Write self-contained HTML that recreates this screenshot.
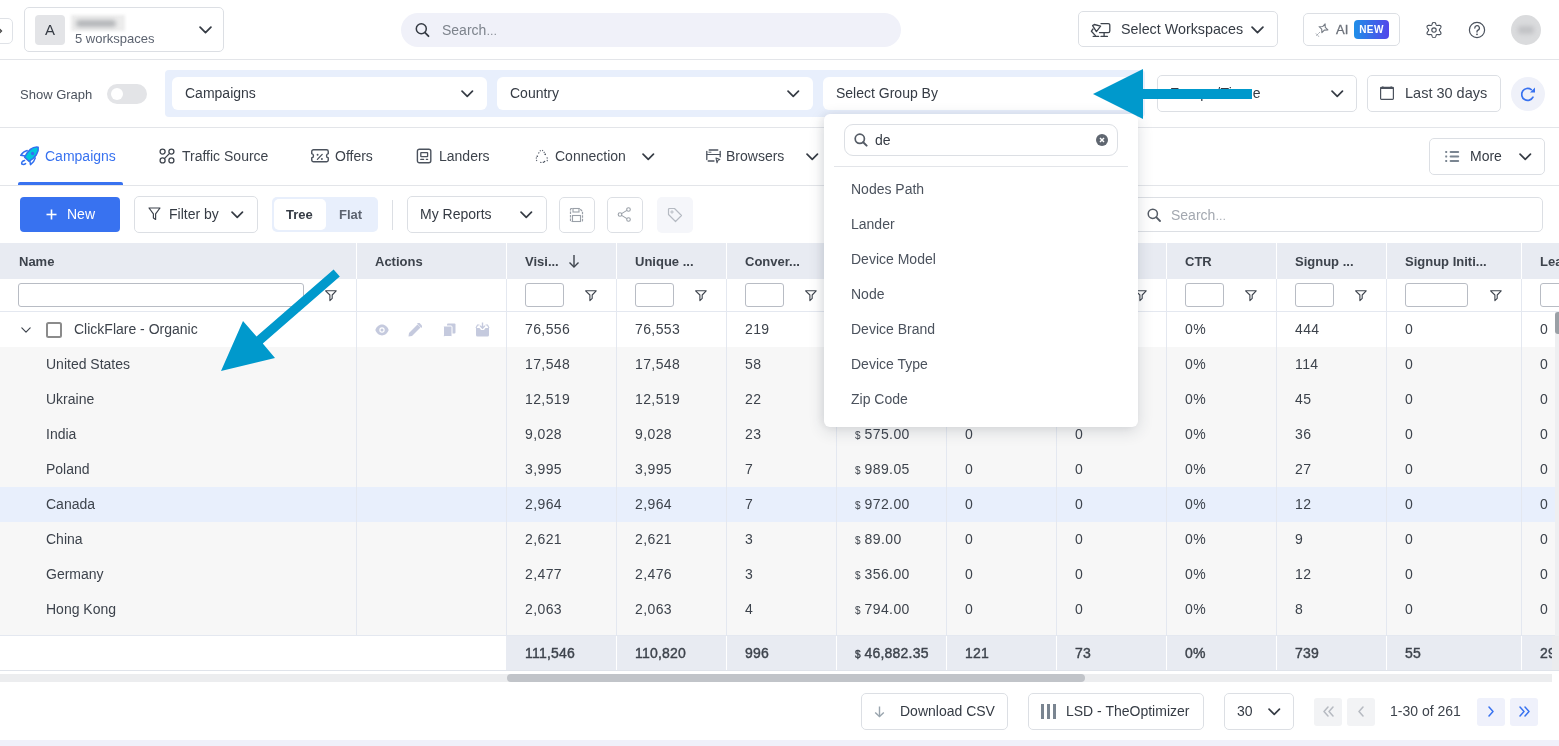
<!DOCTYPE html>
<html><head><meta charset="utf-8"><style>
html,body{margin:0;padding:0;background:#fff;width:1559px;height:746px;overflow:hidden;font-family:"Liberation Sans",sans-serif;}
body{position:relative}
#root{position:absolute;left:0;top:0;width:1559px;height:746px;will-change:transform}
</style></head><body><div id="root">
<div style="position:absolute;left:-20px;top:18px;width:33px;height:26px;border:1px solid #dfe2e7;border-radius:5px;background:#fff;box-sizing:border-box"></div><svg style="position:absolute;left:-2px;top:27px" width="5" height="8" viewBox="0 0 5 8"><polyline points="0.5,1 3.5,4 0.5,7" fill="none" stroke="#444" stroke-width="1.3"/></svg><div style="position:absolute;left:24px;top:7px;width:200px;height:45px;border:1px solid #dcdfe4;border-radius:5px;box-sizing:border-box;background:#fff"></div><div style="position:absolute;left:35px;top:15px;width:30px;height:30px;background:#e3e4e7;border-radius:4px;color:#353b44;font-size:15px;line-height:30px;text-align:center">A</div><div style="position:absolute;left:71px;top:15px;width:54px;height:16px;background:#ececec;filter:blur(1.5px)"></div><div style="position:absolute;left:76px;top:20px;width:40px;height:7px;background:#b4b6b9;border-radius:4px;filter:blur(2px)"></div><div style="position:absolute;left:75px;top:31px;white-space:nowrap;line-height:16px;font-size:13px;color:#5c6370">5 workspaces</div><svg style="position:absolute;left:199px;top:26px" width="13" height="7.8" viewBox="0 0 12 7"><polyline points="1,1 6,6 11,1" fill="none" stroke="#353b44" stroke-width="1.6" stroke-linecap="round" stroke-linejoin="round"/></svg><div style="position:absolute;left:0;top:59px;width:1559px;height:1px;background:#e3e5e9"></div><div style="position:absolute;left:401px;top:13px;width:500px;height:34px;background:#f0f1f9;border-radius:17px"></div><svg style="position:absolute;left:415px;top:22px" width="15" height="16" viewBox="0 0 15 16"><circle cx="6.3" cy="6.8" r="5" fill="none" stroke="#353b44" stroke-width="1.5"/><line x1="10" y1="10.6" x2="13.5" y2="14.2" stroke="#353b44" stroke-width="1.8" stroke-linecap="round"/></svg><div style="position:absolute;left:442px;top:22px;white-space:nowrap;line-height:16px;font-size:14px;color:#7d838c">Search<span style="font-size:11px">…</span></div><div style="position:absolute;left:1078px;top:11px;width:200px;height:36px;border:1px solid #dcdfe4;border-radius:5px;box-sizing:border-box"></div><svg style="position:absolute;left:1085px;top:15px" width="28" height="28" viewBox="0 0 28 28"><g fill="none" stroke="#3d434c" stroke-width="1.3" stroke-linecap="round" stroke-linejoin="round"><path d="M16 8.6 H23.2 a1.6 1.6 0 0 1 1.6 1.6 V16 a1.6 1.6 0 0 1 -1.6 1.6 H14.5"/><line x1="19.1" y1="17.6" x2="19.1" y2="21.4"/><line x1="16" y1="21.4" x2="22.4" y2="21.4"/><path d="M7.6 10.6 L9.3 9.5 L15.6 11.2 L11.4 16.6 Z"/><polyline points="8,14 6.4,16.2 10.4,20.6"/><line x1="8.2" y1="21.4" x2="13.6" y2="21.4"/></g></svg><div style="position:absolute;left:1121px;top:21px;white-space:nowrap;line-height:16px;font-size:14.3px;color:#353b44">Select Workspaces</div><svg style="position:absolute;left:1251px;top:26px" width="13" height="7.8" viewBox="0 0 12 7"><polyline points="1,1 6,6 11,1" fill="none" stroke="#353b44" stroke-width="1.6" stroke-linecap="round" stroke-linejoin="round"/></svg><div style="position:absolute;left:1303px;top:13px;width:97px;height:33px;border:1px solid #dcdfe4;border-radius:5px;box-sizing:border-box"></div><svg style="position:absolute;left:1314px;top:22px" width="16" height="16" viewBox="0 0 16 16"><path d="M9.5 1.6 L10.9 4.9 L14.2 6.3 L10.9 7.7 L9.5 11 L8.1 7.7 L4.8 6.3 L8.1 4.9 Z" fill="none" stroke="#777d86" stroke-width="1.1" stroke-linejoin="round" transform="rotate(20 9.5 6.3)"/><path d="M5.6 10.4 L4.6 11.4 M3.6 12.4 L2.6 13.4 M2.2 11.8 L3 12.6 M4 13.6 L4.6 14.4" stroke="#a0a5ad" stroke-width="1" stroke-linecap="round"/></svg><div style="position:absolute;left:1336px;top:22px;white-space:nowrap;line-height:16px;font-size:13px;color:#6b7079;-webkit-text-stroke:0.3px #6b7079">AI</div><div style="position:absolute;left:1354px;top:20px;width:35px;height:19px;background:linear-gradient(90deg,#1f8fe8,#5346ea);border-radius:4px;color:#fff;font-size:10px;font-weight:bold;line-height:19px;text-align:center;letter-spacing:0.4px">NEW</div><svg style="position:absolute;left:1426px;top:22px" width="16" height="16" viewBox="0 0 16 16"><path d="M8.00,0.15 L8.27,0.18 L8.54,0.28 L8.80,0.43 L9.03,0.64 L9.25,0.88 L9.45,1.17 L9.63,1.47 L9.78,1.78 L9.92,2.09 L10.04,2.39 L10.16,2.66 L10.27,2.89 L10.39,3.09 L10.52,3.25 L10.67,3.37 L10.85,3.44 L11.05,3.48 L11.28,3.48 L11.55,3.46 L11.84,3.42 L12.16,3.38 L12.49,3.35 L12.84,3.32 L13.19,3.33 L13.53,3.36 L13.86,3.42 L14.16,3.53 L14.42,3.67 L14.63,3.85 L14.80,4.08 L14.91,4.33 L14.96,4.61 L14.95,4.90 L14.89,5.21 L14.79,5.53 L14.64,5.84 L14.47,6.14 L14.28,6.43 L14.08,6.71 L13.88,6.96 L13.71,7.20 L13.56,7.42 L13.44,7.62 L13.37,7.81 L13.35,8.00 L13.37,8.19 L13.44,8.38 L13.56,8.58 L13.71,8.80 L13.88,9.04 L14.08,9.29 L14.28,9.57 L14.47,9.86 L14.64,10.16 L14.79,10.47 L14.89,10.79 L14.95,11.10 L14.96,11.39 L14.91,11.67 L14.80,11.92 L14.63,12.15 L14.42,12.33 L14.16,12.47 L13.86,12.58 L13.53,12.64 L13.19,12.67 L12.84,12.68 L12.49,12.65 L12.16,12.62 L11.84,12.58 L11.55,12.54 L11.28,12.52 L11.05,12.52 L10.85,12.56 L10.67,12.63 L10.52,12.75 L10.39,12.91 L10.27,13.11 L10.16,13.34 L10.04,13.61 L9.92,13.91 L9.78,14.22 L9.63,14.53 L9.45,14.83 L9.25,15.12 L9.03,15.36 L8.80,15.57 L8.54,15.72 L8.27,15.82 L8.00,15.85 L7.73,15.82 L7.46,15.72 L7.20,15.57 L6.97,15.36 L6.75,15.12 L6.55,14.83 L6.37,14.53 L6.22,14.22 L6.08,13.91 L5.96,13.61 L5.84,13.34 L5.73,13.11 L5.61,12.91 L5.48,12.75 L5.32,12.63 L5.15,12.56 L4.95,12.52 L4.72,12.52 L4.45,12.54 L4.16,12.58 L3.84,12.62 L3.51,12.65 L3.16,12.68 L2.81,12.67 L2.47,12.64 L2.14,12.58 L1.84,12.47 L1.58,12.33 L1.37,12.15 L1.20,11.93 L1.09,11.67 L1.04,11.39 L1.05,11.10 L1.11,10.79 L1.21,10.47 L1.36,10.16 L1.53,9.86 L1.72,9.57 L1.92,9.29 L2.12,9.04 L2.29,8.80 L2.44,8.58 L2.56,8.38 L2.63,8.19 L2.65,8.00 L2.63,7.81 L2.56,7.62 L2.44,7.42 L2.29,7.20 L2.12,6.96 L1.92,6.71 L1.72,6.43 L1.53,6.14 L1.36,5.84 L1.21,5.53 L1.11,5.21 L1.05,4.90 L1.04,4.61 L1.09,4.33 L1.20,4.07 L1.37,3.85 L1.58,3.67 L1.84,3.53 L2.14,3.42 L2.47,3.36 L2.81,3.33 L3.16,3.32 L3.51,3.35 L3.84,3.38 L4.16,3.42 L4.45,3.46 L4.72,3.48 L4.95,3.48 L5.15,3.44 L5.32,3.37 L5.48,3.25 L5.61,3.09 L5.73,2.89 L5.84,2.66 L5.96,2.39 L6.08,2.09 L6.22,1.78 L6.37,1.47 L6.55,1.17 L6.75,0.88 L6.97,0.64 L7.20,0.43 L7.46,0.28 L7.73,0.18 L8.00,0.15Z" fill="none" stroke="#4b525d" stroke-width="1.15" stroke-linejoin="round"/><circle cx="8" cy="8" r="2.2" fill="none" stroke="#4b525d" stroke-width="1.15"/></svg><svg style="position:absolute;left:1468px;top:21px" width="18" height="18" viewBox="0 0 18 18"><circle cx="9" cy="9" r="7.6" fill="none" stroke="#4b525d" stroke-width="1.2"/><path d="M6.8 7 a2.3 2.3 0 1 1 3.2 2.1 c-0.7 0.35 -1 0.8 -1 1.5 v0.5" fill="none" stroke="#4b525d" stroke-width="1.3" stroke-linecap="round"/><circle cx="9" cy="13.3" r="0.9" fill="#4b525d"/></svg><div style="position:absolute;left:1511px;top:15px;width:30px;height:30px;background:#dadbdd;border-radius:50%"></div><div style="position:absolute;left:1518px;top:26px;width:16px;height:8px;background:#c2c3c6;border-radius:3px;filter:blur(2px)"></div><div style="position:absolute;left:20px;top:87px;white-space:nowrap;line-height:16px;font-size:13px;color:#4b525d">Show Graph</div><div style="position:absolute;left:107px;top:84px;width:40px;height:20px;background:#e3e4e7;border-radius:10px"></div><div style="position:absolute;left:111px;top:88px;width:12px;height:12px;background:#fff;border-radius:50%"></div><div style="position:absolute;left:165px;top:70px;width:980px;height:47px;background:#e8effc;border-radius:4px"></div><div style="position:absolute;left:172px;top:77px;width:315px;height:33px;background:#fff;border-radius:6px"></div><div style="position:absolute;left:185px;top:85px;white-space:nowrap;line-height:16px;font-size:14px;color:#353b44">Campaigns</div><svg style="position:absolute;left:461px;top:90px" width="12.5" height="7.5" viewBox="0 0 12 7"><polyline points="1,1 6,6 11,1" fill="none" stroke="#353b44" stroke-width="1.6" stroke-linecap="round" stroke-linejoin="round"/></svg><div style="position:absolute;left:497px;top:77px;width:316px;height:33px;background:#fff;border-radius:6px"></div><div style="position:absolute;left:510px;top:85px;white-space:nowrap;line-height:16px;font-size:14px;color:#353b44">Country</div><svg style="position:absolute;left:787px;top:90px" width="12.5" height="7.5" viewBox="0 0 12 7"><polyline points="1,1 6,6 11,1" fill="none" stroke="#353b44" stroke-width="1.6" stroke-linecap="round" stroke-linejoin="round"/></svg><div style="position:absolute;left:823px;top:77px;width:315px;height:33px;background:#fff;border-radius:6px"></div><div style="position:absolute;left:836px;top:85px;white-space:nowrap;line-height:16px;font-size:14px;color:#353b44">Select Group By</div><div style="position:absolute;left:0;top:127px;width:1559px;height:1px;background:#e3e5e9"></div><div style="position:absolute;left:1157px;top:75px;width:200px;height:37px;border:1px solid #dcdfe4;border-radius:5px;box-sizing:border-box"></div><div style="position:absolute;left:1170px;top:85px;white-space:nowrap;line-height:16px;font-size:14px;color:#353b44;letter-spacing:0.2px">Europe/Tirane</div><svg style="position:absolute;left:1331px;top:90px" width="12.5" height="7.5" viewBox="0 0 12 7"><polyline points="1,1 6,6 11,1" fill="none" stroke="#353b44" stroke-width="1.6" stroke-linecap="round" stroke-linejoin="round"/></svg><div style="position:absolute;left:1367px;top:75px;width:134px;height:37px;border:1px solid #dcdfe4;border-radius:5px;box-sizing:border-box"></div><svg style="position:absolute;left:1380px;top:86px" width="14" height="14" viewBox="0 0 14 14"><rect x="0.6" y="1.4" width="12.8" height="12" rx="0.8" fill="none" stroke="#4b525d" stroke-width="1.2"/><rect x="0.6" y="1.2" width="12.8" height="1.8" fill="#4b525d"/><rect x="2.3" y="0.3" width="1.1" height="1.5" fill="#4b525d"/><rect x="10.6" y="0.3" width="1.1" height="1.5" fill="#4b525d"/></svg><div style="position:absolute;left:1405px;top:85px;white-space:nowrap;line-height:16px;font-size:14.5px;color:#3d434c">Last 30 days</div><div style="position:absolute;left:1511px;top:77px;width:34px;height:34px;background:#eff1f9;border-radius:50%"></div><svg style="position:absolute;left:1520px;top:86px" width="16" height="16" viewBox="0 0 16 16"><path d="M13 11.2 A6 6 0 1 1 11.3 3.6" fill="none" stroke="#3872f0" stroke-width="1.7" stroke-linecap="round"/><polygon points="15,1.6 15,6.6 10,6.4" fill="#3872f0"/></svg><svg style="position:absolute;left:16px;top:143px" width="24" height="24" viewBox="0 0 24 24"><g stroke="#3170f0" stroke-width="1.5" stroke-linejoin="round" stroke-linecap="round"><path d="M11.2 7.4 C8.5 8 6.2 10 4.7 12.3 L9.2 13" fill="none"/><path d="M19.3 14.9 C18.7 17.6 16.7 19.9 14.5 21.6 L13.8 17.6" fill="none"/><path d="M22.2 4.2 C23.2 9.5 19 15 12.9 18.3 L8.6 14.1 C11.8 8 16.8 3.4 22.2 4.2 Z" fill="#00c8dc"/><path d="M8.6 17.4 C6.2 17.8 5.2 19.6 5.8 21 C7 21.6 8.6 21.3 9.6 20.6" fill="none"/></g><circle cx="16.6" cy="10.5" r="1.7" fill="#3170f0"/></svg><div style="position:absolute;left:45px;top:148px;white-space:nowrap;line-height:16px;font-size:14px;color:#3872f0">Campaigns</div><div style="position:absolute;left:18px;top:182px;width:105px;height:3px;background:#3872f0;border-radius:2px 2px 0 0"></div><svg style="position:absolute;left:159px;top:148px" width="16" height="16" viewBox="0 0 16 16"><g fill="none" stroke="#3d434c" stroke-width="1.3"><circle cx="3.6" cy="3.6" r="2.5"/><circle cx="12.4" cy="3.6" r="2.5"/><circle cx="3.6" cy="12.4" r="2.5"/><circle cx="12.4" cy="12.4" r="2.5"/><line x1="10.6" y1="5.4" x2="5.4" y2="10.6"/></g></svg><div style="position:absolute;left:182px;top:148px;white-space:nowrap;line-height:16px;font-size:14px;color:#3d434c">Traffic Source</div><svg style="position:absolute;left:311px;top:149px" width="18" height="14" viewBox="0 0 18 14"><path d="M2.5 0.75 H15.5 a1.75 1.75 0 0 1 1.75 1.75 V4.6 a2.2 2.2 0 0 0 0 4.3 V11 a1.75 1.75 0 0 1 -1.75 1.75 H2.5 a1.75 1.75 0 0 1 -1.75 -1.75 V8.9 a2.2 2.2 0 0 0 0 -4.3 V2.5 a1.75 1.75 0 0 1 1.75 -1.75 Z" fill="none" stroke="#4b525d" stroke-width="1.4"/><line x1="6.4" y1="10.4" x2="11.2" y2="5.4" stroke="#4b525d" stroke-width="1.3" stroke-linecap="round"/><circle cx="6.6" cy="5.8" r="0.95" fill="#4b525d"/><circle cx="10.9" cy="10" r="0.95" fill="#4b525d"/></svg><div style="position:absolute;left:335px;top:148px;white-space:nowrap;line-height:16px;font-size:14px;color:#3d434c">Offers</div><svg style="position:absolute;left:416px;top:148px" width="16" height="16" viewBox="0 0 16 16"><rect x="1.4" y="1.2" width="13.4" height="13.6" rx="2" fill="none" stroke="#4b525d" stroke-width="1.4"/><rect x="4.8" y="4.6" width="6.8" height="4" rx="0.4" fill="none" stroke="#4b525d" stroke-width="1.3"/><line x1="4.8" y1="11.4" x2="7.6" y2="11.4" stroke="#4b525d" stroke-width="1.3" stroke-linecap="round"/><line x1="10.4" y1="11.4" x2="11.6" y2="11.4" stroke="#4b525d" stroke-width="1.3" stroke-linecap="round"/></svg><div style="position:absolute;left:439px;top:148px;white-space:nowrap;line-height:16px;font-size:14px;color:#3d434c">Landers</div><svg style="position:absolute;left:535px;top:149px" width="14" height="14" viewBox="0 0 14 14"><g fill="none" stroke="#5c6370" stroke-width="1.1" stroke-dasharray="1.3 1.2"><path d="M3.5 4.5 C4.5 2 6 0.8 7.4 1.4 C8.5 2 9.4 3.6 10.6 6"/><path d="M11.8 8.4 C13 10 12.6 12 11 12.6"/><path d="M9 13.2 C7.5 13.6 5.5 13.5 4 13.2"/><path d="M2 12 C0.8 10.5 1 8.5 2.4 7"/></g><g fill="#4b525d"><circle cx="2.3" cy="7.2" r="0.8"/><circle cx="10.2" cy="5.2" r="0.8"/><circle cx="9.5" cy="12.6" r="0.8"/></g></svg><div style="position:absolute;left:555px;top:148px;white-space:nowrap;line-height:16px;font-size:14px;color:#3d434c">Connection</div><svg style="position:absolute;left:642px;top:153px" width="12.5" height="7.5" viewBox="0 0 12 7"><polyline points="1,1 6,6 11,1" fill="none" stroke="#353b44" stroke-width="1.6" stroke-linecap="round" stroke-linejoin="round"/></svg><svg style="position:absolute;left:706px;top:149px" width="15" height="15" viewBox="0 0 15 15"><g fill="none" stroke="#4b525d" stroke-width="1.3" stroke-linecap="round"><line x1="3.2" y1="1" x2="11.8" y2="1"/><line x1="0.8" y1="2.5" x2="0.8" y2="10.6"/><line x1="14.2" y1="2.5" x2="14.2" y2="7.8"/><line x1="2.2" y1="12" x2="8" y2="12"/><line x1="1" y1="5.5" x2="14" y2="5.5" stroke-width="1.2"/><line x1="2.8" y1="3.2" x2="5" y2="3.2" stroke-width="0.9"/><path d="M10 9 L13.8 10.6 L12 11.2 L11 13.8 Z" stroke-width="1.1" stroke-linejoin="round"/></g></svg><div style="position:absolute;left:726px;top:148px;white-space:nowrap;line-height:16px;font-size:14px;color:#3d434c">Browsers</div><svg style="position:absolute;left:806px;top:153px" width="12.5" height="7.5" viewBox="0 0 12 7"><polyline points="1,1 6,6 11,1" fill="none" stroke="#353b44" stroke-width="1.6" stroke-linecap="round" stroke-linejoin="round"/></svg><div style="position:absolute;left:1429px;top:138px;width:116px;height:37px;border:1px solid #dcdfe4;border-radius:5px;box-sizing:border-box"></div><svg style="position:absolute;left:1445px;top:150px" width="15" height="13" viewBox="0 0 15 13"><g fill="#7a8591"><rect x="0.2" y="0.9" width="2" height="2" rx="0.4"/><rect x="0.2" y="5.4" width="2" height="2" rx="0.4"/><rect x="0.2" y="9.9" width="2" height="2" rx="0.4"/><rect x="4.6" y="0.9" width="9.6" height="2" rx="1"/><rect x="4.6" y="5.4" width="9.6" height="2" rx="1"/><rect x="4.6" y="9.9" width="9.6" height="2" rx="1"/></g></svg><div style="position:absolute;left:1470px;top:148px;white-space:nowrap;line-height:16px;font-size:14px;color:#353b44">More</div><svg style="position:absolute;left:1519px;top:153px" width="12.5" height="7.5" viewBox="0 0 12 7"><polyline points="1,1 6,6 11,1" fill="none" stroke="#353b44" stroke-width="1.6" stroke-linecap="round" stroke-linejoin="round"/></svg><div style="position:absolute;left:0;top:185px;width:1559px;height:1px;background:#e3e5e9"></div><div style="position:absolute;left:20px;top:197px;width:100px;height:35px;background:#3872f0;border-radius:4px"></div><svg style="position:absolute;left:46px;top:209px" width="11" height="11" viewBox="0 0 11 11"><line x1="5.5" y1="0.5" x2="5.5" y2="10.5" stroke="#fff" stroke-width="1.6"/><line x1="0.5" y1="5.5" x2="10.5" y2="5.5" stroke="#fff" stroke-width="1.6"/></svg><div style="position:absolute;left:67px;top:206px;white-space:nowrap;line-height:16px;font-size:14px;color:#fff">New</div><div style="position:absolute;left:134px;top:196px;width:124px;height:37px;border:1px solid #dcdfe4;border-radius:5px;box-sizing:border-box"></div><svg style="position:absolute;left:148px;top:207px" width="13" height="14" viewBox="0 0 13 14"><path d="M1 1 H12 L7.6 6.8 V12.5 L5.4 11 V6.8 Z" fill="none" stroke="#3d434c" stroke-width="1.2" stroke-linejoin="round"/></svg><div style="position:absolute;left:169px;top:206px;white-space:nowrap;line-height:16px;font-size:14px;color:#353b44">Filter by</div><svg style="position:absolute;left:231px;top:211px" width="12.5" height="7.5" viewBox="0 0 12 7"><polyline points="1,1 6,6 11,1" fill="none" stroke="#353b44" stroke-width="1.6" stroke-linecap="round" stroke-linejoin="round"/></svg><div style="position:absolute;left:272px;top:197px;width:106px;height:35px;background:#e8effc;border-radius:5px"></div><div style="position:absolute;left:274px;top:199px;width:52px;height:31px;background:#fff;border-radius:5px"></div><div style="position:absolute;left:286px;top:207px;white-space:nowrap;line-height:16px;font-size:13px;color:#353b44;font-weight:bold">Tree</div><div style="position:absolute;left:339px;top:207px;white-space:nowrap;line-height:16px;font-size:13px;color:#5c6370;font-weight:bold">Flat</div><div style="position:absolute;left:392px;top:200px;width:1px;height:30px;background:#dcdfe4"></div><div style="position:absolute;left:407px;top:196px;width:140px;height:37px;border:1px solid #dcdfe4;border-radius:5px;box-sizing:border-box"></div><div style="position:absolute;left:420px;top:206px;white-space:nowrap;line-height:16px;font-size:14px;color:#353b44">My Reports</div><svg style="position:absolute;left:520px;top:211px" width="12.5" height="7.5" viewBox="0 0 12 7"><polyline points="1,1 6,6 11,1" fill="none" stroke="#353b44" stroke-width="1.6" stroke-linecap="round" stroke-linejoin="round"/></svg><div style="position:absolute;left:559px;top:197px;width:36px;height:36px;border:1px solid #dcdfe4;border-radius:5px;box-sizing:border-box"></div><svg style="position:absolute;left:569px;top:207px" width="15" height="16" viewBox="0 0 15 16"><path d="M1.5 2.5 a1 1 0 0 1 1 -1 H10.5 L13.5 4.5 V13.5 a1 1 0 0 1 -1 1 H2.5 a1 1 0 0 1 -1 -1 Z" fill="none" stroke="#9aa0a8" stroke-width="1.2" stroke-dasharray="2.5 1"/><rect x="4" y="1.5" width="6" height="3.5" fill="none" stroke="#9aa0a8" stroke-width="1.1"/><rect x="3.5" y="8.5" width="8" height="6" fill="none" stroke="#9aa0a8" stroke-width="1.1"/></svg><div style="position:absolute;left:607px;top:197px;width:36px;height:36px;border:1px solid #dcdfe4;border-radius:5px;box-sizing:border-box"></div><svg style="position:absolute;left:617px;top:207px" width="15" height="15" viewBox="0 0 15 15"><circle cx="11.5" cy="2.5" r="1.8" fill="none" stroke="#9aa0a8" stroke-width="1.1"/><circle cx="3" cy="7.5" r="1.8" fill="none" stroke="#9aa0a8" stroke-width="1.1"/><circle cx="11.5" cy="12.5" r="1.8" fill="none" stroke="#9aa0a8" stroke-width="1.1"/><line x1="4.6" y1="6.6" x2="9.9" y2="3.4" stroke="#9aa0a8" stroke-width="1.1"/><line x1="4.6" y1="8.4" x2="9.9" y2="11.6" stroke="#9aa0a8" stroke-width="1.1"/></svg><div style="position:absolute;left:657px;top:197px;width:36px;height:36px;background:#f5f6fa;border-radius:5px"></div><svg style="position:absolute;left:667px;top:207px" width="16" height="16" viewBox="0 0 16 16"><path d="M1.5 2.5 a1 1 0 0 1 1 -1 H7.5 L14.5 8.5 L8.5 14.5 L1.5 7.5 Z" fill="none" stroke="#b5bac2" stroke-width="1.2" stroke-linejoin="round"/><circle cx="5" cy="5" r="1.1" fill="none" stroke="#b5bac2" stroke-width="1"/></svg><div style="position:absolute;left:1100px;top:197px;width:443px;height:35px;border:1px solid #dcdfe4;border-radius:5px;box-sizing:border-box"></div><svg style="position:absolute;left:1147px;top:208px" width="14" height="14" viewBox="0 0 14 14"><circle cx="5.8" cy="5.8" r="4.6" fill="none" stroke="#555c66" stroke-width="1.5"/><line x1="9.2" y1="9.2" x2="13" y2="13" stroke="#555c66" stroke-width="1.8" stroke-linecap="round"/></svg><div style="position:absolute;left:1171px;top:207px;white-space:nowrap;line-height:16px;font-size:14px;color:#a3a8b0">Search<span style="font-size:11px">…</span></div><div style="position:absolute;left:0px;top:243px;width:1559px;height:36px;background:#e8ebf2"></div><div style="position:absolute;left:356px;top:243px;width:1px;height:36px;background:#fff"></div><div style="position:absolute;left:506px;top:243px;width:1px;height:36px;background:#fff"></div><div style="position:absolute;left:616px;top:243px;width:1px;height:36px;background:#fff"></div><div style="position:absolute;left:726px;top:243px;width:1px;height:36px;background:#fff"></div><div style="position:absolute;left:836px;top:243px;width:1px;height:36px;background:#fff"></div><div style="position:absolute;left:946px;top:243px;width:1px;height:36px;background:#fff"></div><div style="position:absolute;left:1056px;top:243px;width:1px;height:36px;background:#fff"></div><div style="position:absolute;left:1166px;top:243px;width:1px;height:36px;background:#fff"></div><div style="position:absolute;left:1276px;top:243px;width:1px;height:36px;background:#fff"></div><div style="position:absolute;left:1386px;top:243px;width:1px;height:36px;background:#fff"></div><div style="position:absolute;left:1521px;top:243px;width:1px;height:36px;background:#fff"></div><div style="position:absolute;left:19px;top:254px;white-space:nowrap;line-height:16px;font-size:13px;color:#3d434c;font-weight:bold">Name</div><div style="position:absolute;left:375px;top:254px;white-space:nowrap;line-height:16px;font-size:13px;color:#3d434c;font-weight:bold">Actions</div><div style="position:absolute;left:525px;top:254px;white-space:nowrap;line-height:16px;font-size:13px;color:#3d434c;font-weight:bold">Visi...</div><div style="position:absolute;left:635px;top:254px;white-space:nowrap;line-height:16px;font-size:13px;color:#3d434c;font-weight:bold">Unique ...</div><div style="position:absolute;left:745px;top:254px;white-space:nowrap;line-height:16px;font-size:13px;color:#3d434c;font-weight:bold">Conver...</div><div style="position:absolute;left:855px;top:254px;white-space:nowrap;line-height:16px;font-size:13px;color:#3d434c;font-weight:bold">Revenue</div><div style="position:absolute;left:965px;top:254px;white-space:nowrap;line-height:16px;font-size:13px;color:#3d434c;font-weight:bold">EPC</div><div style="position:absolute;left:1075px;top:254px;white-space:nowrap;line-height:16px;font-size:13px;color:#3d434c;font-weight:bold">CPV</div><div style="position:absolute;left:1185px;top:254px;white-space:nowrap;line-height:16px;font-size:13px;color:#3d434c;font-weight:bold">CTR</div><div style="position:absolute;left:1295px;top:254px;white-space:nowrap;line-height:16px;font-size:13px;color:#3d434c;font-weight:bold">Signup ...</div><div style="position:absolute;left:1405px;top:254px;white-space:nowrap;line-height:16px;font-size:13px;color:#3d434c;font-weight:bold">Signup Initi...</div><div style="position:absolute;left:1540px;top:254px;white-space:nowrap;line-height:16px;font-size:13px;color:#3d434c;font-weight:bold">Lea</div><svg style="position:absolute;left:568px;top:254px" width="12" height="14" viewBox="0 0 12 14"><line x1="6" y1="1" x2="6" y2="13" stroke="#3d434c" stroke-width="1.4"/><polyline points="1.5,8.5 6,13 10.5,8.5" fill="none" stroke="#3d434c" stroke-width="1.4"/></svg><div style="position:absolute;left:0px;top:279px;width:1559px;height:32px;background:#fff"></div><div style="position:absolute;left:18px;top:283px;width:286px;height:24px;border:1px solid #b8bcc4;border-radius:3px;box-sizing:border-box"></div><svg style="position:absolute;left:325px;top:290px" width="12" height="12" viewBox="0 0 12 12"><path d="M0.6 0.8 H11.2 L7.2 5 V8.4 L4.9 10.6 V5 Z" fill="none" stroke="#3d434c" stroke-width="1.1" stroke-linejoin="round"/></svg><div style="position:absolute;left:525px;top:283px;width:39px;height:24px;border:1px solid #b8bcc4;border-radius:3px;box-sizing:border-box"></div><svg style="position:absolute;left:585px;top:290px" width="12" height="12" viewBox="0 0 12 12"><path d="M0.6 0.8 H11.2 L7.2 5 V8.4 L4.9 10.6 V5 Z" fill="none" stroke="#3d434c" stroke-width="1.1" stroke-linejoin="round"/></svg><div style="position:absolute;left:635px;top:283px;width:39px;height:24px;border:1px solid #b8bcc4;border-radius:3px;box-sizing:border-box"></div><svg style="position:absolute;left:695px;top:290px" width="12" height="12" viewBox="0 0 12 12"><path d="M0.6 0.8 H11.2 L7.2 5 V8.4 L4.9 10.6 V5 Z" fill="none" stroke="#3d434c" stroke-width="1.1" stroke-linejoin="round"/></svg><div style="position:absolute;left:745px;top:283px;width:39px;height:24px;border:1px solid #b8bcc4;border-radius:3px;box-sizing:border-box"></div><svg style="position:absolute;left:805px;top:290px" width="12" height="12" viewBox="0 0 12 12"><path d="M0.6 0.8 H11.2 L7.2 5 V8.4 L4.9 10.6 V5 Z" fill="none" stroke="#3d434c" stroke-width="1.1" stroke-linejoin="round"/></svg><div style="position:absolute;left:855px;top:283px;width:39px;height:24px;border:1px solid #b8bcc4;border-radius:3px;box-sizing:border-box"></div><svg style="position:absolute;left:915px;top:290px" width="12" height="12" viewBox="0 0 12 12"><path d="M0.6 0.8 H11.2 L7.2 5 V8.4 L4.9 10.6 V5 Z" fill="none" stroke="#3d434c" stroke-width="1.1" stroke-linejoin="round"/></svg><div style="position:absolute;left:965px;top:283px;width:39px;height:24px;border:1px solid #b8bcc4;border-radius:3px;box-sizing:border-box"></div><svg style="position:absolute;left:1025px;top:290px" width="12" height="12" viewBox="0 0 12 12"><path d="M0.6 0.8 H11.2 L7.2 5 V8.4 L4.9 10.6 V5 Z" fill="none" stroke="#3d434c" stroke-width="1.1" stroke-linejoin="round"/></svg><div style="position:absolute;left:1075px;top:283px;width:39px;height:24px;border:1px solid #b8bcc4;border-radius:3px;box-sizing:border-box"></div><svg style="position:absolute;left:1135px;top:290px" width="12" height="12" viewBox="0 0 12 12"><path d="M0.6 0.8 H11.2 L7.2 5 V8.4 L4.9 10.6 V5 Z" fill="none" stroke="#3d434c" stroke-width="1.1" stroke-linejoin="round"/></svg><div style="position:absolute;left:1185px;top:283px;width:39px;height:24px;border:1px solid #b8bcc4;border-radius:3px;box-sizing:border-box"></div><svg style="position:absolute;left:1245px;top:290px" width="12" height="12" viewBox="0 0 12 12"><path d="M0.6 0.8 H11.2 L7.2 5 V8.4 L4.9 10.6 V5 Z" fill="none" stroke="#3d434c" stroke-width="1.1" stroke-linejoin="round"/></svg><div style="position:absolute;left:1295px;top:283px;width:39px;height:24px;border:1px solid #b8bcc4;border-radius:3px;box-sizing:border-box"></div><svg style="position:absolute;left:1355px;top:290px" width="12" height="12" viewBox="0 0 12 12"><path d="M0.6 0.8 H11.2 L7.2 5 V8.4 L4.9 10.6 V5 Z" fill="none" stroke="#3d434c" stroke-width="1.1" stroke-linejoin="round"/></svg><div style="position:absolute;left:1405px;top:283px;width:63px;height:24px;border:1px solid #b8bcc4;border-radius:3px;box-sizing:border-box"></div><svg style="position:absolute;left:1490px;top:290px" width="12" height="12" viewBox="0 0 12 12"><path d="M0.6 0.8 H11.2 L7.2 5 V8.4 L4.9 10.6 V5 Z" fill="none" stroke="#3d434c" stroke-width="1.1" stroke-linejoin="round"/></svg><div style="position:absolute;left:1540px;top:283px;width:39px;height:24px;border:1px solid #b8bcc4;border-radius:3px;box-sizing:border-box"></div><svg style="position:absolute;left:1600px;top:290px" width="12" height="12" viewBox="0 0 12 12"><path d="M0.6 0.8 H11.2 L7.2 5 V8.4 L4.9 10.6 V5 Z" fill="none" stroke="#3d434c" stroke-width="1.1" stroke-linejoin="round"/></svg><div style="position:absolute;left:356px;top:279px;width:1px;height:32px;background:#e4e8f0"></div><div style="position:absolute;left:506px;top:279px;width:1px;height:32px;background:#e4e8f0"></div><div style="position:absolute;left:616px;top:279px;width:1px;height:32px;background:#e4e8f0"></div><div style="position:absolute;left:726px;top:279px;width:1px;height:32px;background:#e4e8f0"></div><div style="position:absolute;left:836px;top:279px;width:1px;height:32px;background:#e4e8f0"></div><div style="position:absolute;left:946px;top:279px;width:1px;height:32px;background:#e4e8f0"></div><div style="position:absolute;left:1056px;top:279px;width:1px;height:32px;background:#e4e8f0"></div><div style="position:absolute;left:1166px;top:279px;width:1px;height:32px;background:#e4e8f0"></div><div style="position:absolute;left:1276px;top:279px;width:1px;height:32px;background:#e4e8f0"></div><div style="position:absolute;left:1386px;top:279px;width:1px;height:32px;background:#e4e8f0"></div><div style="position:absolute;left:1521px;top:279px;width:1px;height:32px;background:#e4e8f0"></div><div style="position:absolute;left:0px;top:311px;width:1559px;height:1px;background:#e4e8f0"></div><div style="position:absolute;left:0px;top:347px;width:1559px;height:288px;background:#f7f7f7"></div><div style="position:absolute;left:0px;top:312px;width:1559px;height:35px;background:#fff"></div><svg style="position:absolute;left:21px;top:327px" width="10" height="6.0" viewBox="0 0 12 7"><polyline points="1,1 6,6 11,1" fill="none" stroke="#3d434c" stroke-width="1.4" stroke-linecap="round" stroke-linejoin="round"/></svg><div style="position:absolute;left:46px;top:322px;width:16px;height:16px;border:2px solid #8b8b8b;border-radius:2.5px;box-sizing:border-box;background:#fff"></div><div style="position:absolute;left:74px;top:321px;white-space:nowrap;line-height:16px;font-size:14px;color:#3d434c">ClickFlare - Organic</div><svg style="position:absolute;left:375px;top:324px" width="14" height="12" viewBox="0 0 14 12"><path d="M0.3 6 C2 2 4.5 0.6 7 0.6 C9.5 0.6 12 2 13.7 6 C12 10 9.5 11.4 7 11.4 C4.5 11.4 2 10 0.3 6 Z" fill="#c5cade"/><circle cx="7" cy="6" r="2.7" fill="#fff"/><circle cx="7" cy="6" r="1.5" fill="#c5cade"/></svg><svg style="position:absolute;left:408px;top:323px" width="14" height="14" viewBox="0 0 14 14"><path d="M0.5 13.5 L1 10 L9.5 1.5 L12.5 4.5 L4 13 Z" fill="#c5cade"/><path d="M10.5 0.5 L13.5 3.5" stroke="#c5cade" stroke-width="2.2" stroke-linecap="round"/></svg><svg style="position:absolute;left:443px;top:323px" width="13" height="14" viewBox="0 0 13 14"><rect x="4" y="0.5" width="8.5" height="10" rx="1" fill="#c5cade"/><rect x="0.5" y="3" width="8.5" height="10.5" rx="1" fill="#c5cade" stroke="#fff" stroke-width="1"/></svg><svg style="position:absolute;left:475px;top:322px" width="15" height="15" viewBox="0 0 15 15"><path d="M1 6 H4.5 L6 8 H9 L10.5 6 H14 V13 a1.5 1.5 0 0 1 -1.5 1.5 H2.5 A1.5 1.5 0 0 1 1 13 Z" fill="#c5cade"/><path d="M1 6 L2.5 3 H4.5 M14 6 L12.5 3 H10.5" fill="none" stroke="#c5cade" stroke-width="1.2"/><line x1="7.5" y1="0.5" x2="7.5" y2="6" stroke="#c5cade" stroke-width="1.4"/><polyline points="5.2,3.8 7.5,6.2 9.8,3.8" fill="none" stroke="#c5cade" stroke-width="1.4"/></svg><div style="position:absolute;left:525px;top:321px;white-space:nowrap;line-height:16px;font-size:14px;color:#3d434c;letter-spacing:0.4px">76,556</div><div style="position:absolute;left:635px;top:321px;white-space:nowrap;line-height:16px;font-size:14px;color:#3d434c;letter-spacing:0.4px">76,553</div><div style="position:absolute;left:745px;top:321px;white-space:nowrap;line-height:16px;font-size:14px;color:#3d434c;letter-spacing:0.4px">219</div><div style="position:absolute;left:1185px;top:321px;white-space:nowrap;line-height:16px;font-size:14px;color:#3d434c;letter-spacing:0.4px">0%</div><div style="position:absolute;left:1295px;top:321px;white-space:nowrap;line-height:16px;font-size:14px;color:#3d434c;letter-spacing:0.4px">444</div><div style="position:absolute;left:1405px;top:321px;white-space:nowrap;line-height:16px;font-size:14px;color:#3d434c;letter-spacing:0.4px">0</div><div style="position:absolute;left:1540px;top:321px;white-space:nowrap;line-height:16px;font-size:14px;color:#3d434c;letter-spacing:0.4px">0</div><div style="position:absolute;left:356px;top:312px;width:1px;height:35px;background:#e4e8f0"></div><div style="position:absolute;left:506px;top:312px;width:1px;height:35px;background:#e4e8f0"></div><div style="position:absolute;left:616px;top:312px;width:1px;height:35px;background:#e4e8f0"></div><div style="position:absolute;left:726px;top:312px;width:1px;height:35px;background:#e4e8f0"></div><div style="position:absolute;left:836px;top:312px;width:1px;height:35px;background:#e4e8f0"></div><div style="position:absolute;left:946px;top:312px;width:1px;height:35px;background:#e4e8f0"></div><div style="position:absolute;left:1056px;top:312px;width:1px;height:35px;background:#e4e8f0"></div><div style="position:absolute;left:1166px;top:312px;width:1px;height:35px;background:#e4e8f0"></div><div style="position:absolute;left:1276px;top:312px;width:1px;height:35px;background:#e4e8f0"></div><div style="position:absolute;left:1386px;top:312px;width:1px;height:35px;background:#e4e8f0"></div><div style="position:absolute;left:1521px;top:312px;width:1px;height:35px;background:#e4e8f0"></div><div style="position:absolute;left:46px;top:356px;white-space:nowrap;line-height:16px;font-size:14px;color:#3d434c">United States</div><div style="position:absolute;left:525px;top:356px;white-space:nowrap;line-height:16px;font-size:14px;color:#3d434c;letter-spacing:0.4px">17,548</div><div style="position:absolute;left:635px;top:356px;white-space:nowrap;line-height:16px;font-size:14px;color:#3d434c;letter-spacing:0.4px">17,548</div><div style="position:absolute;left:745px;top:356px;white-space:nowrap;line-height:16px;font-size:14px;color:#3d434c;letter-spacing:0.4px">58</div><div style="position:absolute;left:1185px;top:356px;white-space:nowrap;line-height:16px;font-size:14px;color:#3d434c;letter-spacing:0.4px">0%</div><div style="position:absolute;left:1295px;top:356px;white-space:nowrap;line-height:16px;font-size:14px;color:#3d434c;letter-spacing:0.4px">114</div><div style="position:absolute;left:1405px;top:356px;white-space:nowrap;line-height:16px;font-size:14px;color:#3d434c;letter-spacing:0.4px">0</div><div style="position:absolute;left:1540px;top:356px;white-space:nowrap;line-height:16px;font-size:14px;color:#3d434c;letter-spacing:0.4px">0</div><div style="position:absolute;left:356px;top:347px;width:1px;height:35px;background:#e4e8f0"></div><div style="position:absolute;left:506px;top:347px;width:1px;height:35px;background:#e4e8f0"></div><div style="position:absolute;left:616px;top:347px;width:1px;height:35px;background:#e4e8f0"></div><div style="position:absolute;left:726px;top:347px;width:1px;height:35px;background:#e4e8f0"></div><div style="position:absolute;left:836px;top:347px;width:1px;height:35px;background:#e4e8f0"></div><div style="position:absolute;left:946px;top:347px;width:1px;height:35px;background:#e4e8f0"></div><div style="position:absolute;left:1056px;top:347px;width:1px;height:35px;background:#e4e8f0"></div><div style="position:absolute;left:1166px;top:347px;width:1px;height:35px;background:#e4e8f0"></div><div style="position:absolute;left:1276px;top:347px;width:1px;height:35px;background:#e4e8f0"></div><div style="position:absolute;left:1386px;top:347px;width:1px;height:35px;background:#e4e8f0"></div><div style="position:absolute;left:1521px;top:347px;width:1px;height:35px;background:#e4e8f0"></div><div style="position:absolute;left:46px;top:391px;white-space:nowrap;line-height:16px;font-size:14px;color:#3d434c">Ukraine</div><div style="position:absolute;left:525px;top:391px;white-space:nowrap;line-height:16px;font-size:14px;color:#3d434c;letter-spacing:0.4px">12,519</div><div style="position:absolute;left:635px;top:391px;white-space:nowrap;line-height:16px;font-size:14px;color:#3d434c;letter-spacing:0.4px">12,519</div><div style="position:absolute;left:745px;top:391px;white-space:nowrap;line-height:16px;font-size:14px;color:#3d434c;letter-spacing:0.4px">22</div><div style="position:absolute;left:1185px;top:391px;white-space:nowrap;line-height:16px;font-size:14px;color:#3d434c;letter-spacing:0.4px">0%</div><div style="position:absolute;left:1295px;top:391px;white-space:nowrap;line-height:16px;font-size:14px;color:#3d434c;letter-spacing:0.4px">45</div><div style="position:absolute;left:1405px;top:391px;white-space:nowrap;line-height:16px;font-size:14px;color:#3d434c;letter-spacing:0.4px">0</div><div style="position:absolute;left:1540px;top:391px;white-space:nowrap;line-height:16px;font-size:14px;color:#3d434c;letter-spacing:0.4px">0</div><div style="position:absolute;left:356px;top:382px;width:1px;height:35px;background:#e4e8f0"></div><div style="position:absolute;left:506px;top:382px;width:1px;height:35px;background:#e4e8f0"></div><div style="position:absolute;left:616px;top:382px;width:1px;height:35px;background:#e4e8f0"></div><div style="position:absolute;left:726px;top:382px;width:1px;height:35px;background:#e4e8f0"></div><div style="position:absolute;left:836px;top:382px;width:1px;height:35px;background:#e4e8f0"></div><div style="position:absolute;left:946px;top:382px;width:1px;height:35px;background:#e4e8f0"></div><div style="position:absolute;left:1056px;top:382px;width:1px;height:35px;background:#e4e8f0"></div><div style="position:absolute;left:1166px;top:382px;width:1px;height:35px;background:#e4e8f0"></div><div style="position:absolute;left:1276px;top:382px;width:1px;height:35px;background:#e4e8f0"></div><div style="position:absolute;left:1386px;top:382px;width:1px;height:35px;background:#e4e8f0"></div><div style="position:absolute;left:1521px;top:382px;width:1px;height:35px;background:#e4e8f0"></div><div style="position:absolute;left:46px;top:426px;white-space:nowrap;line-height:16px;font-size:14px;color:#3d434c">India</div><div style="position:absolute;left:525px;top:426px;white-space:nowrap;line-height:16px;font-size:14px;color:#3d434c;letter-spacing:0.4px">9,028</div><div style="position:absolute;left:635px;top:426px;white-space:nowrap;line-height:16px;font-size:14px;color:#3d434c;letter-spacing:0.4px">9,028</div><div style="position:absolute;left:745px;top:426px;white-space:nowrap;line-height:16px;font-size:14px;color:#3d434c;letter-spacing:0.4px">23</div><div style="position:absolute;left:855px;top:426px;white-space:nowrap;line-height:16px;font-size:14px;color:#3d434c;letter-spacing:0.4px"><span style="font-size:10px;margin-right:4px;letter-spacing:0">$</span>575.00</div><div style="position:absolute;left:965px;top:426px;white-space:nowrap;line-height:16px;font-size:14px;color:#3d434c;letter-spacing:0.4px">0</div><div style="position:absolute;left:1075px;top:426px;white-space:nowrap;line-height:16px;font-size:14px;color:#3d434c;letter-spacing:0.4px">0</div><div style="position:absolute;left:1185px;top:426px;white-space:nowrap;line-height:16px;font-size:14px;color:#3d434c;letter-spacing:0.4px">0%</div><div style="position:absolute;left:1295px;top:426px;white-space:nowrap;line-height:16px;font-size:14px;color:#3d434c;letter-spacing:0.4px">36</div><div style="position:absolute;left:1405px;top:426px;white-space:nowrap;line-height:16px;font-size:14px;color:#3d434c;letter-spacing:0.4px">0</div><div style="position:absolute;left:1540px;top:426px;white-space:nowrap;line-height:16px;font-size:14px;color:#3d434c;letter-spacing:0.4px">0</div><div style="position:absolute;left:356px;top:417px;width:1px;height:35px;background:#e4e8f0"></div><div style="position:absolute;left:506px;top:417px;width:1px;height:35px;background:#e4e8f0"></div><div style="position:absolute;left:616px;top:417px;width:1px;height:35px;background:#e4e8f0"></div><div style="position:absolute;left:726px;top:417px;width:1px;height:35px;background:#e4e8f0"></div><div style="position:absolute;left:836px;top:417px;width:1px;height:35px;background:#e4e8f0"></div><div style="position:absolute;left:946px;top:417px;width:1px;height:35px;background:#e4e8f0"></div><div style="position:absolute;left:1056px;top:417px;width:1px;height:35px;background:#e4e8f0"></div><div style="position:absolute;left:1166px;top:417px;width:1px;height:35px;background:#e4e8f0"></div><div style="position:absolute;left:1276px;top:417px;width:1px;height:35px;background:#e4e8f0"></div><div style="position:absolute;left:1386px;top:417px;width:1px;height:35px;background:#e4e8f0"></div><div style="position:absolute;left:1521px;top:417px;width:1px;height:35px;background:#e4e8f0"></div><div style="position:absolute;left:46px;top:461px;white-space:nowrap;line-height:16px;font-size:14px;color:#3d434c">Poland</div><div style="position:absolute;left:525px;top:461px;white-space:nowrap;line-height:16px;font-size:14px;color:#3d434c;letter-spacing:0.4px">3,995</div><div style="position:absolute;left:635px;top:461px;white-space:nowrap;line-height:16px;font-size:14px;color:#3d434c;letter-spacing:0.4px">3,995</div><div style="position:absolute;left:745px;top:461px;white-space:nowrap;line-height:16px;font-size:14px;color:#3d434c;letter-spacing:0.4px">7</div><div style="position:absolute;left:855px;top:461px;white-space:nowrap;line-height:16px;font-size:14px;color:#3d434c;letter-spacing:0.4px"><span style="font-size:10px;margin-right:4px;letter-spacing:0">$</span>989.05</div><div style="position:absolute;left:965px;top:461px;white-space:nowrap;line-height:16px;font-size:14px;color:#3d434c;letter-spacing:0.4px">0</div><div style="position:absolute;left:1075px;top:461px;white-space:nowrap;line-height:16px;font-size:14px;color:#3d434c;letter-spacing:0.4px">0</div><div style="position:absolute;left:1185px;top:461px;white-space:nowrap;line-height:16px;font-size:14px;color:#3d434c;letter-spacing:0.4px">0%</div><div style="position:absolute;left:1295px;top:461px;white-space:nowrap;line-height:16px;font-size:14px;color:#3d434c;letter-spacing:0.4px">27</div><div style="position:absolute;left:1405px;top:461px;white-space:nowrap;line-height:16px;font-size:14px;color:#3d434c;letter-spacing:0.4px">0</div><div style="position:absolute;left:1540px;top:461px;white-space:nowrap;line-height:16px;font-size:14px;color:#3d434c;letter-spacing:0.4px">0</div><div style="position:absolute;left:356px;top:452px;width:1px;height:35px;background:#e4e8f0"></div><div style="position:absolute;left:506px;top:452px;width:1px;height:35px;background:#e4e8f0"></div><div style="position:absolute;left:616px;top:452px;width:1px;height:35px;background:#e4e8f0"></div><div style="position:absolute;left:726px;top:452px;width:1px;height:35px;background:#e4e8f0"></div><div style="position:absolute;left:836px;top:452px;width:1px;height:35px;background:#e4e8f0"></div><div style="position:absolute;left:946px;top:452px;width:1px;height:35px;background:#e4e8f0"></div><div style="position:absolute;left:1056px;top:452px;width:1px;height:35px;background:#e4e8f0"></div><div style="position:absolute;left:1166px;top:452px;width:1px;height:35px;background:#e4e8f0"></div><div style="position:absolute;left:1276px;top:452px;width:1px;height:35px;background:#e4e8f0"></div><div style="position:absolute;left:1386px;top:452px;width:1px;height:35px;background:#e4e8f0"></div><div style="position:absolute;left:1521px;top:452px;width:1px;height:35px;background:#e4e8f0"></div><div style="position:absolute;left:0px;top:487px;width:1559px;height:35px;background:#e8effc"></div><div style="position:absolute;left:46px;top:496px;white-space:nowrap;line-height:16px;font-size:14px;color:#3d434c">Canada</div><div style="position:absolute;left:525px;top:496px;white-space:nowrap;line-height:16px;font-size:14px;color:#3d434c;letter-spacing:0.4px">2,964</div><div style="position:absolute;left:635px;top:496px;white-space:nowrap;line-height:16px;font-size:14px;color:#3d434c;letter-spacing:0.4px">2,964</div><div style="position:absolute;left:745px;top:496px;white-space:nowrap;line-height:16px;font-size:14px;color:#3d434c;letter-spacing:0.4px">7</div><div style="position:absolute;left:855px;top:496px;white-space:nowrap;line-height:16px;font-size:14px;color:#3d434c;letter-spacing:0.4px"><span style="font-size:10px;margin-right:4px;letter-spacing:0">$</span>972.00</div><div style="position:absolute;left:965px;top:496px;white-space:nowrap;line-height:16px;font-size:14px;color:#3d434c;letter-spacing:0.4px">0</div><div style="position:absolute;left:1075px;top:496px;white-space:nowrap;line-height:16px;font-size:14px;color:#3d434c;letter-spacing:0.4px">0</div><div style="position:absolute;left:1185px;top:496px;white-space:nowrap;line-height:16px;font-size:14px;color:#3d434c;letter-spacing:0.4px">0%</div><div style="position:absolute;left:1295px;top:496px;white-space:nowrap;line-height:16px;font-size:14px;color:#3d434c;letter-spacing:0.4px">12</div><div style="position:absolute;left:1405px;top:496px;white-space:nowrap;line-height:16px;font-size:14px;color:#3d434c;letter-spacing:0.4px">0</div><div style="position:absolute;left:1540px;top:496px;white-space:nowrap;line-height:16px;font-size:14px;color:#3d434c;letter-spacing:0.4px">0</div><div style="position:absolute;left:356px;top:487px;width:1px;height:35px;background:#e4e8f0"></div><div style="position:absolute;left:506px;top:487px;width:1px;height:35px;background:#e4e8f0"></div><div style="position:absolute;left:616px;top:487px;width:1px;height:35px;background:#e4e8f0"></div><div style="position:absolute;left:726px;top:487px;width:1px;height:35px;background:#e4e8f0"></div><div style="position:absolute;left:836px;top:487px;width:1px;height:35px;background:#e4e8f0"></div><div style="position:absolute;left:946px;top:487px;width:1px;height:35px;background:#e4e8f0"></div><div style="position:absolute;left:1056px;top:487px;width:1px;height:35px;background:#e4e8f0"></div><div style="position:absolute;left:1166px;top:487px;width:1px;height:35px;background:#e4e8f0"></div><div style="position:absolute;left:1276px;top:487px;width:1px;height:35px;background:#e4e8f0"></div><div style="position:absolute;left:1386px;top:487px;width:1px;height:35px;background:#e4e8f0"></div><div style="position:absolute;left:1521px;top:487px;width:1px;height:35px;background:#e4e8f0"></div><div style="position:absolute;left:46px;top:531px;white-space:nowrap;line-height:16px;font-size:14px;color:#3d434c">China</div><div style="position:absolute;left:525px;top:531px;white-space:nowrap;line-height:16px;font-size:14px;color:#3d434c;letter-spacing:0.4px">2,621</div><div style="position:absolute;left:635px;top:531px;white-space:nowrap;line-height:16px;font-size:14px;color:#3d434c;letter-spacing:0.4px">2,621</div><div style="position:absolute;left:745px;top:531px;white-space:nowrap;line-height:16px;font-size:14px;color:#3d434c;letter-spacing:0.4px">3</div><div style="position:absolute;left:855px;top:531px;white-space:nowrap;line-height:16px;font-size:14px;color:#3d434c;letter-spacing:0.4px"><span style="font-size:10px;margin-right:4px;letter-spacing:0">$</span>89.00</div><div style="position:absolute;left:965px;top:531px;white-space:nowrap;line-height:16px;font-size:14px;color:#3d434c;letter-spacing:0.4px">0</div><div style="position:absolute;left:1075px;top:531px;white-space:nowrap;line-height:16px;font-size:14px;color:#3d434c;letter-spacing:0.4px">0</div><div style="position:absolute;left:1185px;top:531px;white-space:nowrap;line-height:16px;font-size:14px;color:#3d434c;letter-spacing:0.4px">0%</div><div style="position:absolute;left:1295px;top:531px;white-space:nowrap;line-height:16px;font-size:14px;color:#3d434c;letter-spacing:0.4px">9</div><div style="position:absolute;left:1405px;top:531px;white-space:nowrap;line-height:16px;font-size:14px;color:#3d434c;letter-spacing:0.4px">0</div><div style="position:absolute;left:1540px;top:531px;white-space:nowrap;line-height:16px;font-size:14px;color:#3d434c;letter-spacing:0.4px">0</div><div style="position:absolute;left:356px;top:522px;width:1px;height:35px;background:#e4e8f0"></div><div style="position:absolute;left:506px;top:522px;width:1px;height:35px;background:#e4e8f0"></div><div style="position:absolute;left:616px;top:522px;width:1px;height:35px;background:#e4e8f0"></div><div style="position:absolute;left:726px;top:522px;width:1px;height:35px;background:#e4e8f0"></div><div style="position:absolute;left:836px;top:522px;width:1px;height:35px;background:#e4e8f0"></div><div style="position:absolute;left:946px;top:522px;width:1px;height:35px;background:#e4e8f0"></div><div style="position:absolute;left:1056px;top:522px;width:1px;height:35px;background:#e4e8f0"></div><div style="position:absolute;left:1166px;top:522px;width:1px;height:35px;background:#e4e8f0"></div><div style="position:absolute;left:1276px;top:522px;width:1px;height:35px;background:#e4e8f0"></div><div style="position:absolute;left:1386px;top:522px;width:1px;height:35px;background:#e4e8f0"></div><div style="position:absolute;left:1521px;top:522px;width:1px;height:35px;background:#e4e8f0"></div><div style="position:absolute;left:46px;top:566px;white-space:nowrap;line-height:16px;font-size:14px;color:#3d434c">Germany</div><div style="position:absolute;left:525px;top:566px;white-space:nowrap;line-height:16px;font-size:14px;color:#3d434c;letter-spacing:0.4px">2,477</div><div style="position:absolute;left:635px;top:566px;white-space:nowrap;line-height:16px;font-size:14px;color:#3d434c;letter-spacing:0.4px">2,476</div><div style="position:absolute;left:745px;top:566px;white-space:nowrap;line-height:16px;font-size:14px;color:#3d434c;letter-spacing:0.4px">3</div><div style="position:absolute;left:855px;top:566px;white-space:nowrap;line-height:16px;font-size:14px;color:#3d434c;letter-spacing:0.4px"><span style="font-size:10px;margin-right:4px;letter-spacing:0">$</span>356.00</div><div style="position:absolute;left:965px;top:566px;white-space:nowrap;line-height:16px;font-size:14px;color:#3d434c;letter-spacing:0.4px">0</div><div style="position:absolute;left:1075px;top:566px;white-space:nowrap;line-height:16px;font-size:14px;color:#3d434c;letter-spacing:0.4px">0</div><div style="position:absolute;left:1185px;top:566px;white-space:nowrap;line-height:16px;font-size:14px;color:#3d434c;letter-spacing:0.4px">0%</div><div style="position:absolute;left:1295px;top:566px;white-space:nowrap;line-height:16px;font-size:14px;color:#3d434c;letter-spacing:0.4px">12</div><div style="position:absolute;left:1405px;top:566px;white-space:nowrap;line-height:16px;font-size:14px;color:#3d434c;letter-spacing:0.4px">0</div><div style="position:absolute;left:1540px;top:566px;white-space:nowrap;line-height:16px;font-size:14px;color:#3d434c;letter-spacing:0.4px">0</div><div style="position:absolute;left:356px;top:557px;width:1px;height:35px;background:#e4e8f0"></div><div style="position:absolute;left:506px;top:557px;width:1px;height:35px;background:#e4e8f0"></div><div style="position:absolute;left:616px;top:557px;width:1px;height:35px;background:#e4e8f0"></div><div style="position:absolute;left:726px;top:557px;width:1px;height:35px;background:#e4e8f0"></div><div style="position:absolute;left:836px;top:557px;width:1px;height:35px;background:#e4e8f0"></div><div style="position:absolute;left:946px;top:557px;width:1px;height:35px;background:#e4e8f0"></div><div style="position:absolute;left:1056px;top:557px;width:1px;height:35px;background:#e4e8f0"></div><div style="position:absolute;left:1166px;top:557px;width:1px;height:35px;background:#e4e8f0"></div><div style="position:absolute;left:1276px;top:557px;width:1px;height:35px;background:#e4e8f0"></div><div style="position:absolute;left:1386px;top:557px;width:1px;height:35px;background:#e4e8f0"></div><div style="position:absolute;left:1521px;top:557px;width:1px;height:35px;background:#e4e8f0"></div><div style="position:absolute;left:46px;top:601px;white-space:nowrap;line-height:16px;font-size:14px;color:#3d434c">Hong Kong</div><div style="position:absolute;left:525px;top:601px;white-space:nowrap;line-height:16px;font-size:14px;color:#3d434c;letter-spacing:0.4px">2,063</div><div style="position:absolute;left:635px;top:601px;white-space:nowrap;line-height:16px;font-size:14px;color:#3d434c;letter-spacing:0.4px">2,063</div><div style="position:absolute;left:745px;top:601px;white-space:nowrap;line-height:16px;font-size:14px;color:#3d434c;letter-spacing:0.4px">4</div><div style="position:absolute;left:855px;top:601px;white-space:nowrap;line-height:16px;font-size:14px;color:#3d434c;letter-spacing:0.4px"><span style="font-size:10px;margin-right:4px;letter-spacing:0">$</span>794.00</div><div style="position:absolute;left:965px;top:601px;white-space:nowrap;line-height:16px;font-size:14px;color:#3d434c;letter-spacing:0.4px">0</div><div style="position:absolute;left:1075px;top:601px;white-space:nowrap;line-height:16px;font-size:14px;color:#3d434c;letter-spacing:0.4px">0</div><div style="position:absolute;left:1185px;top:601px;white-space:nowrap;line-height:16px;font-size:14px;color:#3d434c;letter-spacing:0.4px">0%</div><div style="position:absolute;left:1295px;top:601px;white-space:nowrap;line-height:16px;font-size:14px;color:#3d434c;letter-spacing:0.4px">8</div><div style="position:absolute;left:1405px;top:601px;white-space:nowrap;line-height:16px;font-size:14px;color:#3d434c;letter-spacing:0.4px">0</div><div style="position:absolute;left:1540px;top:601px;white-space:nowrap;line-height:16px;font-size:14px;color:#3d434c;letter-spacing:0.4px">0</div><div style="position:absolute;left:356px;top:592px;width:1px;height:35px;background:#e4e8f0"></div><div style="position:absolute;left:506px;top:592px;width:1px;height:35px;background:#e4e8f0"></div><div style="position:absolute;left:616px;top:592px;width:1px;height:35px;background:#e4e8f0"></div><div style="position:absolute;left:726px;top:592px;width:1px;height:35px;background:#e4e8f0"></div><div style="position:absolute;left:836px;top:592px;width:1px;height:35px;background:#e4e8f0"></div><div style="position:absolute;left:946px;top:592px;width:1px;height:35px;background:#e4e8f0"></div><div style="position:absolute;left:1056px;top:592px;width:1px;height:35px;background:#e4e8f0"></div><div style="position:absolute;left:1166px;top:592px;width:1px;height:35px;background:#e4e8f0"></div><div style="position:absolute;left:1276px;top:592px;width:1px;height:35px;background:#e4e8f0"></div><div style="position:absolute;left:1386px;top:592px;width:1px;height:35px;background:#e4e8f0"></div><div style="position:absolute;left:1521px;top:592px;width:1px;height:35px;background:#e4e8f0"></div><div style="position:absolute;left:356px;top:627px;width:1px;height:8px;background:#e4e8f0"></div><div style="position:absolute;left:506px;top:627px;width:1px;height:8px;background:#e4e8f0"></div><div style="position:absolute;left:616px;top:627px;width:1px;height:8px;background:#e4e8f0"></div><div style="position:absolute;left:726px;top:627px;width:1px;height:8px;background:#e4e8f0"></div><div style="position:absolute;left:836px;top:627px;width:1px;height:8px;background:#e4e8f0"></div><div style="position:absolute;left:946px;top:627px;width:1px;height:8px;background:#e4e8f0"></div><div style="position:absolute;left:1056px;top:627px;width:1px;height:8px;background:#e4e8f0"></div><div style="position:absolute;left:1166px;top:627px;width:1px;height:8px;background:#e4e8f0"></div><div style="position:absolute;left:1276px;top:627px;width:1px;height:8px;background:#e4e8f0"></div><div style="position:absolute;left:1386px;top:627px;width:1px;height:8px;background:#e4e8f0"></div><div style="position:absolute;left:1521px;top:627px;width:1px;height:8px;background:#e4e8f0"></div><div style="position:absolute;left:0px;top:635px;width:1559px;height:1px;background:#e4e8f0"></div><div style="position:absolute;left:506px;top:636px;width:1046px;height:34px;background:#e8ebf2"></div><div style="position:absolute;left:616px;top:636px;width:1px;height:34px;background:#fff"></div><div style="position:absolute;left:726px;top:636px;width:1px;height:34px;background:#fff"></div><div style="position:absolute;left:836px;top:636px;width:1px;height:34px;background:#fff"></div><div style="position:absolute;left:946px;top:636px;width:1px;height:34px;background:#fff"></div><div style="position:absolute;left:1056px;top:636px;width:1px;height:34px;background:#fff"></div><div style="position:absolute;left:1166px;top:636px;width:1px;height:34px;background:#fff"></div><div style="position:absolute;left:1276px;top:636px;width:1px;height:34px;background:#fff"></div><div style="position:absolute;left:1386px;top:636px;width:1px;height:34px;background:#fff"></div><div style="position:absolute;left:1521px;top:636px;width:1px;height:34px;background:#fff"></div><div style="position:absolute;left:525px;top:645px;white-space:nowrap;line-height:16px;font-size:14px;color:#3d434c;-webkit-text-stroke:0.4px #3d434c;letter-spacing:0.2px">111,546</div><div style="position:absolute;left:635px;top:645px;white-space:nowrap;line-height:16px;font-size:14px;color:#3d434c;-webkit-text-stroke:0.4px #3d434c;letter-spacing:0.2px">110,820</div><div style="position:absolute;left:745px;top:645px;white-space:nowrap;line-height:16px;font-size:14px;color:#3d434c;-webkit-text-stroke:0.4px #3d434c;letter-spacing:0.2px">996</div><div style="position:absolute;left:855px;top:645px;white-space:nowrap;line-height:16px;font-size:14px;color:#3d434c;-webkit-text-stroke:0.4px #3d434c;letter-spacing:0.2px"><span style="font-size:10px;margin-right:4px;letter-spacing:0">$</span>46,882.35</div><div style="position:absolute;left:965px;top:645px;white-space:nowrap;line-height:16px;font-size:14px;color:#3d434c;-webkit-text-stroke:0.4px #3d434c;letter-spacing:0.2px">121</div><div style="position:absolute;left:1075px;top:645px;white-space:nowrap;line-height:16px;font-size:14px;color:#3d434c;-webkit-text-stroke:0.4px #3d434c;letter-spacing:0.2px">73</div><div style="position:absolute;left:1185px;top:645px;white-space:nowrap;line-height:16px;font-size:14px;color:#3d434c;-webkit-text-stroke:0.4px #3d434c;letter-spacing:0.2px">0%</div><div style="position:absolute;left:1295px;top:645px;white-space:nowrap;line-height:16px;font-size:14px;color:#3d434c;-webkit-text-stroke:0.4px #3d434c;letter-spacing:0.2px">739</div><div style="position:absolute;left:1405px;top:645px;white-space:nowrap;line-height:16px;font-size:14px;color:#3d434c;-webkit-text-stroke:0.4px #3d434c;letter-spacing:0.2px">55</div><div style="position:absolute;left:1540px;top:645px;white-space:nowrap;line-height:16px;font-size:14px;color:#3d434c;-webkit-text-stroke:0.4px #3d434c;letter-spacing:0.2px">29</div><div style="position:absolute;left:0px;top:670px;width:1559px;height:1px;background:#dfe3ea"></div><div style="position:absolute;left:0px;top:671px;width:1552px;height:12px;background:#fff"></div><div style="position:absolute;left:0px;top:674px;width:1552px;height:8px;background:#ecedef"></div><div style="position:absolute;left:507px;top:674px;width:578px;height:8px;background:#c1c4c9;border-radius:4px"></div><div style="position:absolute;left:1555px;top:312px;width:4px;height:324px;background:#eeeff1"></div><div style="position:absolute;left:1552px;top:636px;width:7px;height:34px;background:#ebecee"></div><div style="position:absolute;left:1555px;top:312px;width:4px;height:22px;background:#9aa0a6;border-radius:3px 0 0 3px"></div><div style="position:absolute;left:861px;top:693px;width:147px;height:37px;border:1px solid #dcdfe4;border-radius:5px;box-sizing:border-box"></div><svg style="position:absolute;left:874px;top:706px" width="11" height="12" viewBox="0 0 11 12"><line x1="5.5" y1="0.5" x2="5.5" y2="10.5" stroke="#9aa5ae" stroke-width="1.4"/><polyline points="1.2,6.5 5.5,10.6 9.8,6.5" fill="none" stroke="#9aa5ae" stroke-width="1.4"/></svg><div style="position:absolute;left:900px;top:703px;white-space:nowrap;line-height:16px;font-size:14px;color:#353b44">Download CSV</div><div style="position:absolute;left:1028px;top:693px;width:176px;height:37px;border:1px solid #dcdfe4;border-radius:5px;box-sizing:border-box"></div><div style="position:absolute;left:1041px;top:704px;width:3px;height:15px;background:#7a8591"></div><div style="position:absolute;left:1047px;top:704px;width:3px;height:15px;background:#7a8591"></div><div style="position:absolute;left:1053px;top:704px;width:3px;height:15px;background:#7a8591"></div><div style="position:absolute;left:1066px;top:703px;white-space:nowrap;line-height:16px;font-size:14px;color:#353b44">LSD - TheOptimizer</div><div style="position:absolute;left:1224px;top:693px;width:70px;height:37px;border:1px solid #dcdfe4;border-radius:5px;box-sizing:border-box"></div><div style="position:absolute;left:1237px;top:703px;white-space:nowrap;line-height:16px;font-size:14px;color:#353b44">30</div><svg style="position:absolute;left:1268px;top:708px" width="12.5" height="7.5" viewBox="0 0 12 7"><polyline points="1,1 6,6 11,1" fill="none" stroke="#353b44" stroke-width="1.6" stroke-linecap="round" stroke-linejoin="round"/></svg><div style="position:absolute;left:1314px;top:698px;width:28px;height:28px;background:#f2f3f5;border-radius:3px"></div><svg style="position:absolute;left:1322.5px;top:706px" width="11" height="11" viewBox="0 0 11 11"><polyline points="5,1 1,5.5 5,10" fill="none" stroke="#b6bac1" stroke-width="1.5" stroke-linecap="round" stroke-linejoin="round"/><polyline points="10,1 6,5.5 10,10" fill="none" stroke="#b6bac1" stroke-width="1.5" stroke-linecap="round" stroke-linejoin="round"/></svg><div style="position:absolute;left:1347px;top:698px;width:28px;height:28px;background:#f2f3f5;border-radius:3px"></div><svg style="position:absolute;left:1358.0px;top:706px" width="6" height="11" viewBox="0 0 6 11"><polyline points="5,1 1,5.5 5,10" fill="none" stroke="#b6bac1" stroke-width="1.5" stroke-linecap="round" stroke-linejoin="round"/></svg><div style="position:absolute;left:1477px;top:698px;width:28px;height:28px;background:#eff1fb;border-radius:3px"></div><svg style="position:absolute;left:1488.0px;top:706px" width="6" height="11" viewBox="0 0 6 11"><polyline points="1,1 5,5.5 1,10" fill="none" stroke="#3872f0" stroke-width="1.5" stroke-linecap="round" stroke-linejoin="round"/></svg><div style="position:absolute;left:1510px;top:698px;width:28px;height:28px;background:#eff1fb;border-radius:3px"></div><svg style="position:absolute;left:1518.5px;top:706px" width="11" height="11" viewBox="0 0 11 11"><polyline points="1,1 5,5.5 1,10" fill="none" stroke="#3872f0" stroke-width="1.5" stroke-linecap="round" stroke-linejoin="round"/><polyline points="6,1 10,5.5 6,10" fill="none" stroke="#3872f0" stroke-width="1.5" stroke-linecap="round" stroke-linejoin="round"/></svg><div style="position:absolute;left:1390px;top:703px;white-space:nowrap;line-height:16px;font-size:14px;color:#3d434c">1-30 of 261</div><div style="position:absolute;left:0px;top:740px;width:1559px;height:6px;background:#f0f0fa"></div><div style="position:absolute;left:824px;top:114px;width:314px;height:313px;background:#fff;border-radius:6px;box-shadow:0 4px 16px rgba(40,50,70,0.16), -3px 0 10px rgba(40,50,70,0.06)"></div><div style="position:absolute;left:844px;top:124px;width:274px;height:32px;border:1px solid #dcdfe4;border-radius:9px;box-sizing:border-box;background:#fff"></div><svg style="position:absolute;left:854px;top:133px" width="14" height="14" viewBox="0 0 14 14"><circle cx="5.8" cy="5.8" r="4.6" fill="none" stroke="#555c66" stroke-width="1.7"/><line x1="9.2" y1="9.2" x2="12.6" y2="12.6" stroke="#555c66" stroke-width="2" stroke-linecap="round"/></svg><div style="position:absolute;left:875px;top:132px;white-space:nowrap;line-height:16px;font-size:14px;color:#353b44">de</div><svg style="position:absolute;left:1096px;top:134px" width="12" height="12" viewBox="0 0 12 12"><circle cx="6" cy="6" r="6" fill="#5f6670"/><line x1="4" y1="4" x2="8" y2="8" stroke="#fff" stroke-width="1.4"/><line x1="8" y1="4" x2="4" y2="8" stroke="#fff" stroke-width="1.4"/></svg><div style="position:absolute;left:834px;top:166px;width:294px;height:1px;background:#e3e5e9"></div><div style="position:absolute;left:851px;top:181px;white-space:nowrap;line-height:16px;font-size:14px;color:#4b525d">Nodes Path</div><div style="position:absolute;left:851px;top:216px;white-space:nowrap;line-height:16px;font-size:14px;color:#4b525d">Lander</div><div style="position:absolute;left:851px;top:251px;white-space:nowrap;line-height:16px;font-size:14px;color:#4b525d">Device Model</div><div style="position:absolute;left:851px;top:286px;white-space:nowrap;line-height:16px;font-size:14px;color:#4b525d">Node</div><div style="position:absolute;left:851px;top:321px;white-space:nowrap;line-height:16px;font-size:14px;color:#4b525d">Device Brand</div><div style="position:absolute;left:851px;top:356px;white-space:nowrap;line-height:16px;font-size:14px;color:#4b525d">Device Type</div><div style="position:absolute;left:851px;top:391px;white-space:nowrap;line-height:16px;font-size:14px;color:#4b525d">Zip Code</div><svg style="position:absolute;left:0;top:0" width="1559" height="746"><polygon points="1093,94 1143,69 1143,89 1252,89 1252,99 1143,99 1143,119" fill="#0099cc"/><polygon points="221,371 243,321 256.5,336.5 333.6,269.4 339.8,276.5 262.8,343.6 275,358" fill="#0099cc"/></svg>
</div></body></html>
